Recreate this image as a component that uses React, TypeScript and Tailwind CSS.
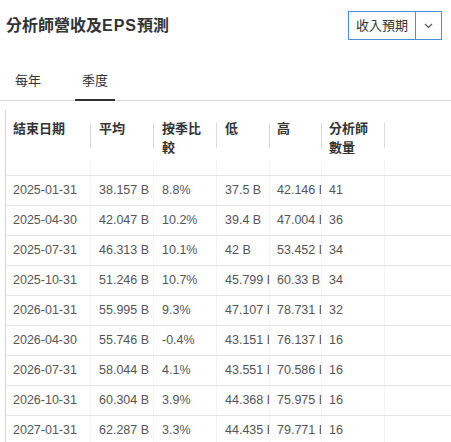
import React from "react";

const FONT = {
  fontFamily: '"Liberation Sans", Arial, "Noto Sans CJK TC", sans-serif',
};

const cols = [
  { w: "w-[85px]", pl: "pl-[7px]" },
  { w: "w-[63px]", pl: "pl-[8px]" },
  { w: "w-[63px]", pl: "pl-[8px]" },
  { w: "w-[53px]", pl: "pl-[8px]" },
  { w: "w-[52px]", pl: "pl-[7px]" },
  { w: "w-[63px]", pl: "pl-[7px]" },
];

const headers: string[][] = [
  ["結束日期"],
  ["平均"],
  ["按季比", "較"],
  ["低"],
  ["高"],
  ["分析師", "數量"],
];

const rows: string[][] = [
  ["2025-01-31", "38.157 B", "8.8%", "37.5 B", "42.146 B", "41"],
  ["2025-04-30", "42.047 B", "10.2%", "39.4 B", "47.004 B", "36"],
  ["2025-07-31", "46.313 B", "10.1%", "42 B", "53.452 B", "34"],
  ["2025-10-31", "51.246 B", "10.7%", "45.799 B", "60.33 B", "34"],
  ["2026-01-31", "55.995 B", "9.3%", "47.107 B", "78.731 B", "32"],
  ["2026-04-30", "55.746 B", "-0.4%", "43.151 B", "76.137 B", "16"],
  ["2026-07-31", "58.044 B", "4.1%", "43.551 B", "70.586 B", "16"],
  ["2026-10-31", "60.304 B", "3.9%", "44.368 B", "75.975 B", "16"],
  ["2027-01-31", "62.287 B", "3.3%", "44.435 B", "79.771 B", "16"],
];

export default function App() {
  return (
    <div className="w-[451px] h-[442px] overflow-hidden bg-white" style={FONT}>
      {/* Header */}
      <div className="flex items-start justify-between pl-[6px] pr-[9px] pt-[11px]">
        <h2 className="mt-[4px] text-[16px] leading-[22px] font-bold text-[#333]">
          分析師營收及<span className="tracking-[1px]">EPS</span>預測
        </h2>
        <div className="flex h-[29px] border border-[#4a8fd9] bg-white">
          <button className="px-[7px] text-[13px] leading-[27px] text-[#333]">收入預期</button>
          <div className="w-px bg-[#4a8fd9]" />
          <button className="flex w-[25px] items-center justify-center text-[#555]">
            <svg width="9" height="6" viewBox="0 0 9 6" fill="none">
              <path d="M1 1l3.5 3.5L8 1" stroke="#555" strokeWidth="1.1" />
            </svg>
          </button>
        </div>
      </div>

      {/* Tabs */}
      <div className="mt-[19px] flex border-b border-[#dcdcdc]">
        <button className="ml-[8px] h-[42px] border-b-2 border-transparent px-[7px] pt-[4px] text-[13px] text-[#333] mb-[-1px]">
          每年
        </button>
        <button className="ml-[27px] h-[42px] border-b-2 border-[#333] px-[7px] pt-[4px] text-[13px] text-[#333] mb-[-1px]">
          季度
        </button>
      </div>

      {/* Table */}
      <div className="ml-[5px] mt-[9px] border-l border-[#d6d6d6]">
        {/* Header row */}
        <div className="flex h-[50px]">
          {headers.map((h, i) => (
            <div key={i} className={`flex ${cols[i].w} shrink-0`}>
              <div
                className={`flex-1 ${cols[i].pl} pt-[9px] text-[13px] font-bold leading-[19px] text-[#333]`}
              >
                {h.map((l, j) => (
                  <div key={j}>{l}</div>
                ))}
              </div>
              <div className="mt-[13px] h-[25px] w-px bg-[#d9d9d9]" />
            </div>
          ))}
        </div>
        {/* Empty filter row */}
        <div className="flex h-[16px] border-b border-[#e4e4e4]">
          {cols.map((c, i) => (
            <div key={i} className={`${c.w} shrink-0 border-r border-[#f3f3f3]`} />
          ))}
        </div>
        {/* Data rows */}
        {rows.map((r, ri) => (
          <div key={ri} className="flex h-[30px] border-b border-[#e4e4e4]">
            {r.map((v, ci) => (
              <div
                key={ci}
                className={`${cols[ci].w} ${cols[ci].pl} shrink-0 overflow-hidden whitespace-nowrap border-r border-[#f3f3f3] text-[12.5px] leading-[29px] text-[#555]`}
              >
                {v}
              </div>
            ))}
          </div>
        ))}
      </div>
    </div>
  );
}
